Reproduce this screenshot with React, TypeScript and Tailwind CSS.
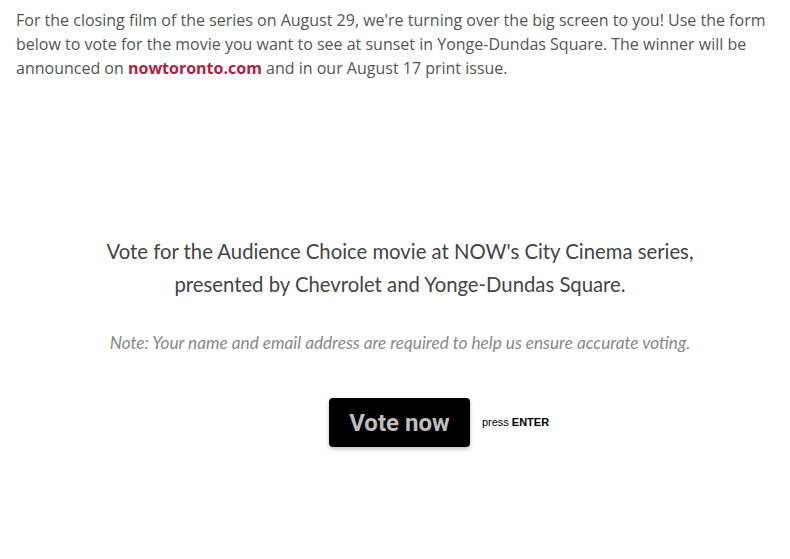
export default function App() {
  return (
    <div className="w-[790px] h-[559px] bg-white overflow-hidden">
      <p
        className="pl-[16px] pr-[20px] pt-[8px] text-[16px] leading-[24px] text-[#555]"
        style={{ fontFamily: '"Open Sans", sans-serif' }}
      >
        For the closing film of the series on August 29, we're turning over the big screen to you! Use the form
        below to vote for the movie you want to see at sunset in Yonge-Dundas Square. The winner will be
        announced on <span className="font-bold text-[#b01e44]">nowtoronto.com</span> and in our August 17 print issue.
      </p>
      <div className="mt-[155px] pl-[10px] flex flex-col items-center" style={{ fontFamily: 'Lato, sans-serif' }}>
        <p className="text-center text-[20.3px] leading-[33px] text-[#444]">
          Vote for the Audience Choice movie at NOW's City Cinema series,
          <br />
          presented by Chevrolet and Yonge-Dundas Square.
        </p>
        <p className="mt-[32px] text-center text-[17.2px] italic text-[#888] leading-[20px]">
          Note: Your name and email address are required to help us ensure accurate voting.
        </p>
        <div className="mt-[45px] flex items-center pl-[78px]">
          <button
            className="w-[141px] h-[49px] rounded-[4px] bg-black text-[#bdbdbd] text-[24px] font-bold shadow-[0_2px_4px_rgba(0,0,0,0.25)]"
            style={{ fontFamily: 'Roboto, sans-serif' }}
          >
            Vote now
          </button>
          <span
            className="ml-[12px] text-[11px] text-black"
            style={{ fontFamily: '"Liberation Sans", Arial, sans-serif' }}
          >
            press <b>ENTER</b>
          </span>
        </div>
      </div>
    </div>
  );
}
